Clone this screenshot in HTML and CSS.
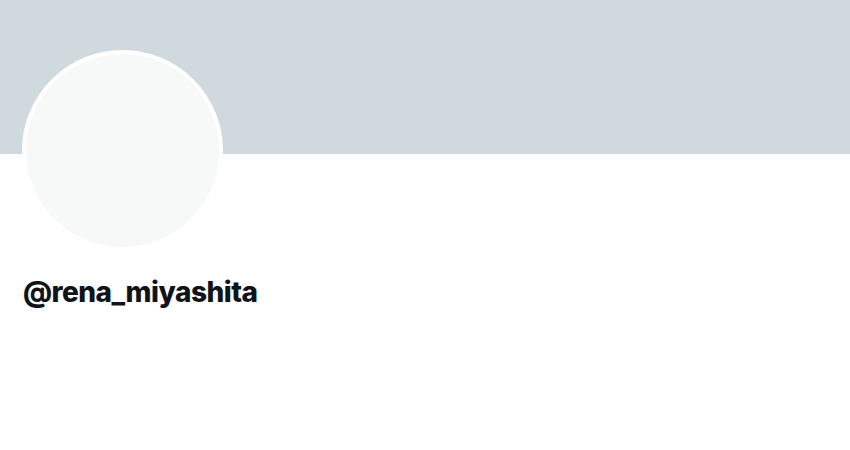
FILE: index.html
```html
<!DOCTYPE html>
<html lang="en">
<head>
  <meta charset="UTF-8">
  <meta name="viewport" content="width=device-width, initial-scale=1.0">
  <title>@rena_miyashita</title>
  <link rel="stylesheet" href="styles.css">
</head>
<body>
  <div class="banner"></div>

  <div class="profile">
    <div class="avatar"></div>
    <h1 class="handle">@rena_miyashita</h1>
  </div>
</body>
</html>
```

FILE: styles.css
```css
body {
  font-family: Inter, "Noto Sans", Arial, sans-serif;
  background-color: #fff;
  margin: 0;
  color: #0f1419;
}

.banner {
  height: 154px;
  background-color: #cfd9de;
}

.profile {
  padding: 0 22px;
}

.avatar {
  width: 193px;
  height: 193px;
  margin-top: -104px;
  border: 4px solid #fff;
  border-radius: 50%;
  background-color: #f7f9f9;
}

.handle {
  margin: 25px 0 0 1px;
  font-size: 28px;
  font-weight: 800;
  letter-spacing: -0.5px;
  line-height: 32px;
}
```
